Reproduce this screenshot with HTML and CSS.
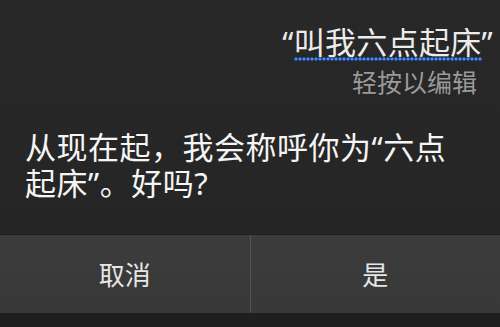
FILE: index.html
```html
<!DOCTYPE html>
<html lang="zh-CN">
<head>
<meta charset="utf-8">
<link rel="stylesheet" href="styles.css">
</head>
<body>
<div class="screen">
  <div class="query">
    <div class="quote">“<span class="spoken">叫我六点起床</span>”</div>
    <div class="hint">轻按以编辑</div>
  </div>
  <div class="answer">从现在起，我会称呼你为“六点<br>起床”。好吗?</div>
  <div class="actions">
    <div class="btn btn-cancel">取消</div>
    <div class="btn">是</div>
  </div>
  <div class="footer"></div>
</div>
</body>
</html>
```
FILE: styles.css
```css
html, body {
  margin: 0;
  padding: 0;
  background: #242424;
}
.screen {
  width: 500px;
  height: 327px;
  display: flex;
  flex-direction: column;
  overflow: hidden;
  background: linear-gradient(180deg, #282828 0%, #262626 50%, #232323 100%);
  font-family: "Noto Sans", "Noto Sans CJK SC", sans-serif;
  color: #f2f2f2;
}
.query {
  padding-top: 22px;
  text-align: right;
}
.quote {
  font-size: 31px;
  line-height: 40px;
  letter-spacing: 0.3px;
  color: #ececec;
  padding-right: 7px;
}
.spoken {
  position: relative;
}
.spoken::after {
  content: "";
  position: absolute;
  left: 0;
  right: 0;
  bottom: 2px;
  height: 4px;
  background-image: radial-gradient(circle, #7ab0f6 0, #3a7ada 1px, #2458b4 1.6px, transparent 2px);
  background-size: 4px 4px;
  background-repeat: repeat-x;
}
.hint {
  font-size: 25px;
  line-height: 34px;
  margin-top: 3px;
  color: #9a9a9a;
  padding-right: 23px;
}
.answer {
  margin-top: 30px;
  padding-left: 25px;
  font-size: 31px;
  line-height: 36px;
  letter-spacing: 0.5px;
  color: #f5f5f5;
}
.actions {
  margin-top: auto;
  height: 78px;
  display: flex;
  border-top: 1px solid #1e1e1e;
  background: linear-gradient(180deg, #3c3c3c 0%, #383838 100%);
}
.btn {
  flex: 1;
  display: flex;
  align-items: center;
  justify-content: center;
  font-size: 26px;
  color: #e6e6e6;
}
.btn-cancel {
  border-right: 1px solid #545454;
}
.footer {
  height: 14px;
  background: #1f1f1f;
}
```
